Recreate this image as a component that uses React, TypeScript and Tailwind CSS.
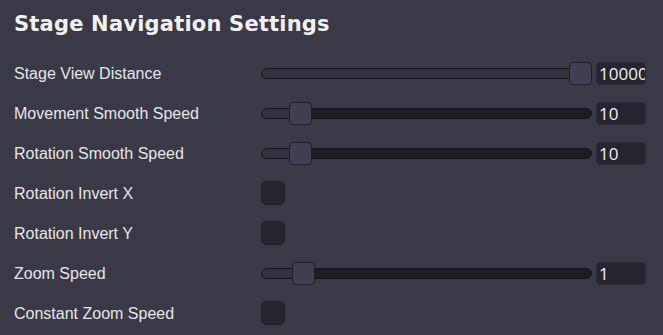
import React from 'react'

type Row =
  | { label: string; kind: 'slider'; thumb: number; value: string }
  | { label: string; kind: 'check' }

const rows: Row[] = [
  { label: 'Stage View Distance', kind: 'slider', thumb: 308, value: '10000' },
  { label: 'Movement Smooth Speed', kind: 'slider', thumb: 28, value: '10' },
  { label: 'Rotation Smooth Speed', kind: 'slider', thumb: 28, value: '10' },
  { label: 'Rotation Invert X', kind: 'check' },
  { label: 'Rotation Invert Y', kind: 'check' },
  { label: 'Zoom Speed', kind: 'slider', thumb: 31, value: '1' },
  { label: 'Constant Zoom Speed', kind: 'check' }
]

const Slider = ({ thumb, value }: { thumb: number; value: string }) => (
  <div className="flex items-center gap-[4px]">
    <div className="relative w-[331px] h-[23px] flex items-center">
      <div className="w-full h-[11px] rounded-full bg-[#1c1c21] border border-[#141418] overflow-hidden">
        <div
          className="h-full bg-[#33323f]"
          style={{ width: thumb + 11 }}
        />
      </div>
      <div
        className="absolute top-0 w-[23px] h-[23px] rounded-[4px] bg-[#403f51] border border-[#1e1e27]"
        style={{ left: thumb }}
      />
    </div>
    <div
      className="w-[50px] h-[23px] rounded-[4px] bg-[#26252f] border border-[#2c2b36] overflow-hidden pl-[2px] text-[17px] leading-[21px] text-[#f0f0f0] whitespace-nowrap"
      style={{ fontFamily: '"Open Sans", sans-serif' }}
    >
      {value}
    </div>
  </div>
)

export default function App() {
  return (
    <div
      className="w-[663px] h-[335px] bg-[#3a3946] pl-[14px] overflow-hidden"
      style={{ fontFamily: '"Liberation Sans", Arial, sans-serif' }}
    >
      <h1
        className="h-[53px] pt-[9px] text-[21px] font-bold text-[#f2f2f2] tracking-[0.2px]"
        style={{ fontFamily: '"DejaVu Sans", Verdana, sans-serif' }}
      >
        Stage Navigation Settings
      </h1>
      {rows.map((r, i) => (
        <div key={i} className="flex items-center h-[40px]">
          <span className="w-[247px] pt-[2px] text-[16px] text-[#e6e6e6]">{r.label}</span>
          {r.kind === 'slider' ? (
            <Slider thumb={r.thumb} value={r.value} />
          ) : (
            <div className="w-[24px] h-[24px] rounded-[5px] bg-[#272630] border border-[#22212a]" />
          )}
        </div>
      ))}
    </div>
  )
}
